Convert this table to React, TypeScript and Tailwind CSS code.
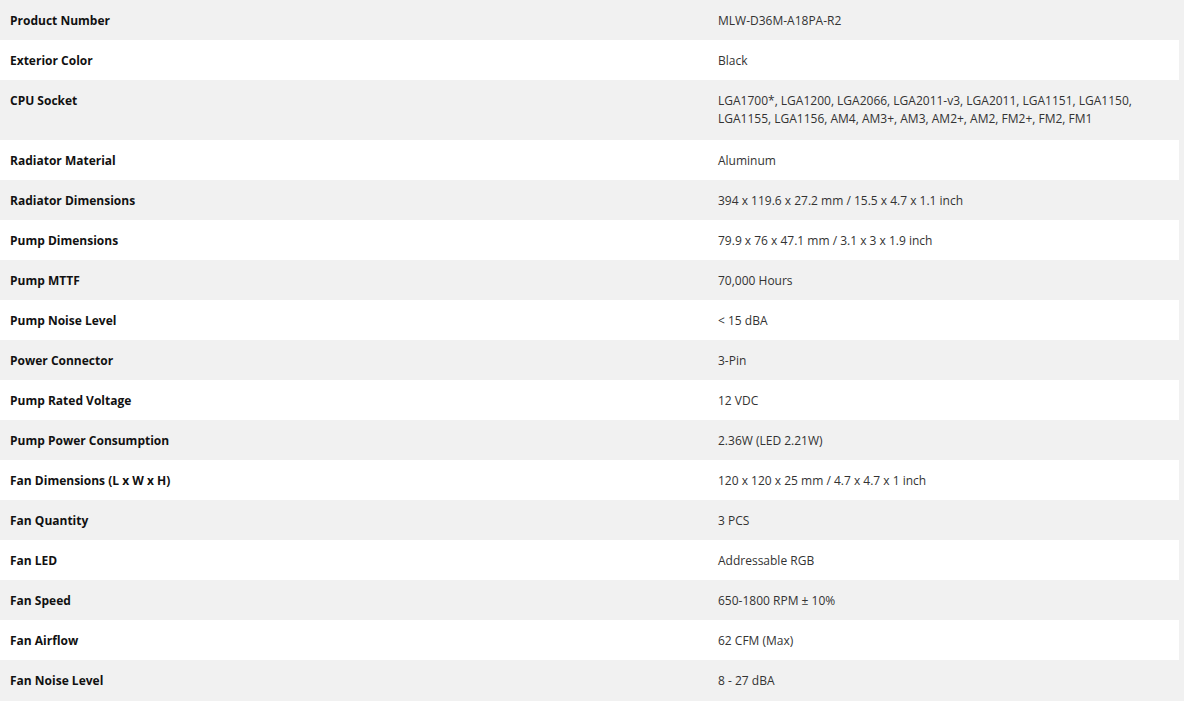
import React from "react";

type Spec = { label: string; value: React.ReactNode; tall?: boolean };

const specs: Spec[] = [
  { label: "Product Number", value: "MLW-D36M-A18PA-R2" },
  { label: "Exterior Color", value: "Black" },
  {
    label: "CPU Socket",
    value:
      "LGA1700*, LGA1200, LGA2066, LGA2011-v3, LGA2011, LGA1151, LGA1150, LGA1155, LGA1156, AM4, AM3+, AM3, AM2+, AM2, FM2+, FM2, FM1",
    tall: true,
  },
  { label: "Radiator Material", value: "Aluminum" },
  { label: "Radiator Dimensions", value: "394 x 119.6 x 27.2 mm / 15.5 x 4.7 x 1.1 inch" },
  { label: "Pump Dimensions", value: "79.9 x 76 x 47.1 mm / 3.1 x 3 x 1.9 inch" },
  { label: "Pump MTTF", value: "70,000 Hours" },
  { label: "Pump Noise Level", value: "< 15 dBA" },
  { label: "Power Connector", value: "3-Pin" },
  { label: "Pump Rated Voltage", value: "12 VDC" },
  { label: "Pump Power Consumption", value: "2.36W (LED 2.21W)" },
  { label: "Fan Dimensions (L x W x H)", value: "120 x 120 x 25 mm / 4.7 x 4.7 x 1 inch" },
  { label: "Fan Quantity", value: "3 PCS" },
  { label: "Fan LED", value: "Addressable RGB" },
  { label: "Fan Speed", value: "650-1800 RPM ± 10%" },
  { label: "Fan Airflow", value: "62 CFM (Max)" },
  { label: "Fan Noise Level", value: "8 - 27 dBA" },
];

export default function App() {
  return (
    <div className="h-[701px] bg-[#f1f1f1] font-['Open_Sans',sans-serif] text-[12px] leading-[18px]">
      <table className="w-[1179px] table-fixed border-collapse bg-white">
        <colgroup>
          <col className="w-[708px]" />
          <col />
        </colgroup>
        <tbody>
          {specs.map((s, i) => (
            <tr
              key={s.label}
              className={`${i % 2 === 0 ? "bg-[#f1f1f1]" : "bg-white"} ${s.tall ? "h-[60px]" : "h-10"}`}
            >
              <td className="px-[10px] pt-[12px] align-top font-bold text-[#111111]">{s.label}</td>
              <td className="pl-[10px] pr-[30px] pt-[12px] align-top text-[#333333]">{s.value}</td>
            </tr>
          ))}
        </tbody>
      </table>
    </div>
  );
}
